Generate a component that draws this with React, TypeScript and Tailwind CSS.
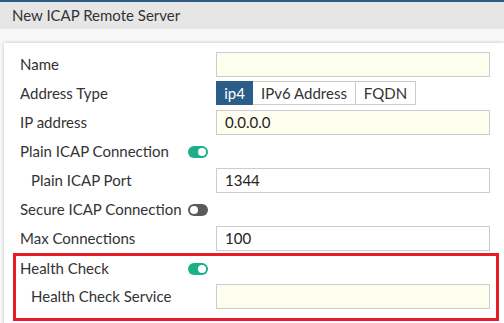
import React from "react";

const font = { fontFamily: "Lato, 'Noto Sans', sans-serif" };

function Toggle({ on }: { on: boolean }) {
  return on ? (
    <div className="w-[20px] h-[12px] rounded-full bg-[#1cb08a] relative">
      <div className="absolute right-[2px] top-[2px] w-[8px] h-[8px] rounded-full bg-white" />
    </div>
  ) : (
    <div className="w-[20px] h-[12px] rounded-full bg-[#5a5a5a] relative">
      <div className="absolute left-[2px] top-[2px] w-[8px] h-[8px] rounded-full bg-white" />
    </div>
  );
}

function Input({ value, yellow }: { value?: string; yellow?: boolean }) {
  return (
    <div
      className={`w-[274px] h-[25px] border border-[#cccccc] flex items-center px-[8px] text-[15px] text-[#222] ${
        yellow ? "bg-[#fefeee]" : "bg-white"
      }`}
    >
      {value}
    </div>
  );
}

export default function App() {
  return (
    <div className="w-[504px] h-[323px] overflow-hidden bg-[#f8f8f8] text-[#333]" style={font}>
      <div className="h-[2px] bg-[#2c5b84]" />
      <div className="h-[27px] bg-[#e6e6e6] flex items-center pl-[12px] text-[15px] text-[#333]">
        New ICAP Remote Server
      </div>
      <div className="pt-[14px] pl-[4px]">
        <div className="bg-white shadow-[0_0_4px_rgba(0,0,0,0.22)] pt-[9px] pl-[9px] h-[300px]">
          <div className="flex flex-col gap-[4px] pl-[7px] text-[15px]">
            <div className="flex items-center h-[25px]">
              <div className="w-[196px]">Name</div>
              <Input yellow />
            </div>
            <div className="flex items-start h-[25px]">
              <div className="w-[196px] h-[24px] flex items-center">Address Type</div>
              <div className="flex h-[24px]">
                <div className="w-[37px] bg-[#2a5d87] text-white flex items-center justify-center border border-[#2a5d87]">ip4</div>
                <div className="w-[103px] border border-l-0 border-[#cccccc] flex items-center justify-center">IPv6 Address</div>
                <div className="w-[60px] border border-l-0 border-[#cccccc] flex items-center justify-center">FQDN</div>
              </div>
            </div>
            <div className="flex items-center h-[25px]">
              <div className="w-[196px]">IP address</div>
              <Input yellow value="0.0.0.0" />
            </div>
            <div className="flex items-center h-[25px]">
              <div className="w-[168px]">Plain ICAP Connection</div>
              <Toggle on />
            </div>
            <div className="flex items-center h-[25px]">
              <div className="w-[196px] pl-[11px]">Plain ICAP Port</div>
              <Input value="1344" />
            </div>
            <div className="flex items-center h-[25px]">
              <div className="w-[168px] whitespace-nowrap">Secure ICAP Connection</div>
              <Toggle on={false} />
            </div>
            <div className="flex items-center h-[25px]">
              <div className="w-[196px]">Max Connections</div>
              <Input value="100" />
            </div>
          </div>
          <div className="mt-[2px] w-[486px] border-[3px] border-[#e41e26] pl-[4px] pb-[9px] text-[15px]">
            <div className="flex items-center h-[25px]">
              <div className="w-[168px]">Health Check</div>
              <Toggle on />
            </div>
            <div className="flex items-center h-[25px] mt-[3px]">
              <div className="w-[196px] pl-[11px]">Health Check Service</div>
              <Input yellow />
            </div>
          </div>
        </div>
      </div>
    </div>
  );
}
